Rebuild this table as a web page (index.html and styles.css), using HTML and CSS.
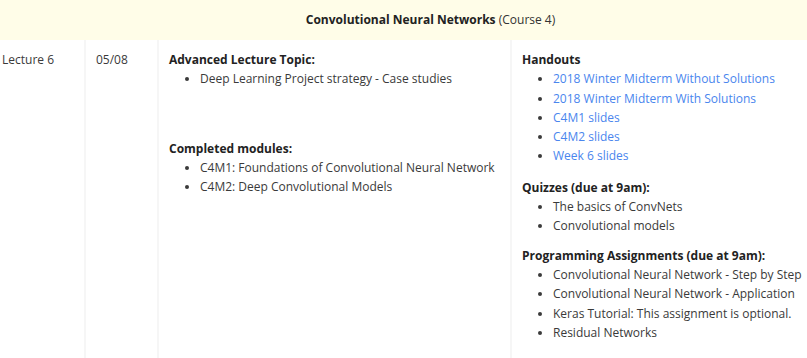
FILE: index.html
```
<!DOCTYPE html>
<html>
<head>
<meta charset="utf-8">
<link rel="stylesheet" href="styles.css">
</head>
<body>
<table class="schedule">
  <colgroup>
    <col class="c-lec"><col class="c-date"><col class="c-topic"><col class="c-mat">
  </colgroup>
  <thead>
    <tr><th colspan="4" class="course"><strong>Convolutional Neural Networks</strong> (Course 4)</th></tr>
  </thead>
  <tbody>
    <tr>
      <td class="lec">Lecture 6</td>
      <td>05/08</td>
      <td>
        <div class="hd">Advanced Lecture Topic:</div>
        <ul>
          <li>Deep Learning Project strategy - Case studies</li>
        </ul>
        <div class="hd gap-lg">Completed modules:</div>
        <ul>
          <li>C4M1: Foundations of Convolutional Neural Network</li>
          <li>C4M2: Deep Convolutional Models</li>
        </ul>
      </td>
      <td class="mat">
        <div class="hd">Handouts</div>
        <ul>
          <li><a href="#">2018 Winter Midterm Without Solutions</a></li>
          <li><a href="#">2018 Winter Midterm With Solutions</a></li>
          <li><a href="#">C4M1 slides</a></li>
          <li><a href="#">C4M2 slides</a></li>
          <li><a href="#">Week 6 slides</a></li>
        </ul>
        <div class="hd gap">Quizzes (due at 9am):</div>
        <ul>
          <li>The basics of ConvNets</li>
          <li>Convolutional models</li>
        </ul>
        <div class="hd gap-sm">Programming Assignments (due at 9am):</div>
        <ul>
          <li>Convolutional Neural Network - Step by Step</li>
          <li>Convolutional Neural Network - Application</li>
          <li>Keras Tutorial: This assignment is optional.</li>
          <li>Residual Networks</li>
        </ul>
      </td>
    </tr>
  </tbody>
</table>
</body>
</html>
```
FILE: styles.css
```
html, body {
  margin: 0;
  padding: 0;
  background: #fff;
}
body {
  font-family: "Open Sans", "Noto Sans", sans-serif;
  font-size: 12px;
  line-height: 19.3px;
  color: #3a3a3a;
}
.schedule {
  border-collapse: collapse;
  width: 807px;
  table-layout: fixed;
}
.c-lec { width: 85px; }
.c-date { width: 73px; }
.c-topic { width: 353px; }
.c-mat { width: 296px; }
.course {
  background: #fffde8;
  height: 40px;
  padding: 0 0 0 54px;
  font-weight: normal;
  text-align: center;
  color: #333;
}
.course strong { font-weight: 700; color: #222; }
td {
  vertical-align: top;
  padding: 10px 10px 0 10px;
  border-left: 2px solid #f6f6f6;
  height: 316px;
  white-space: nowrap;
}
td.lec { border-left: none; padding-left: 2px; }
td.mat { padding-right: 0; }
.hd {
  font-weight: 700;
  color: #222;
}
.gap { margin-top: 12px; }
.gap-sm { margin-top: 10px; }
.gap-lg { margin-top: 50px; }
ul {
  margin: 0;
  padding-left: 31px;
}
a {
  color: #4a86ee;
  text-decoration: none;
}
```
